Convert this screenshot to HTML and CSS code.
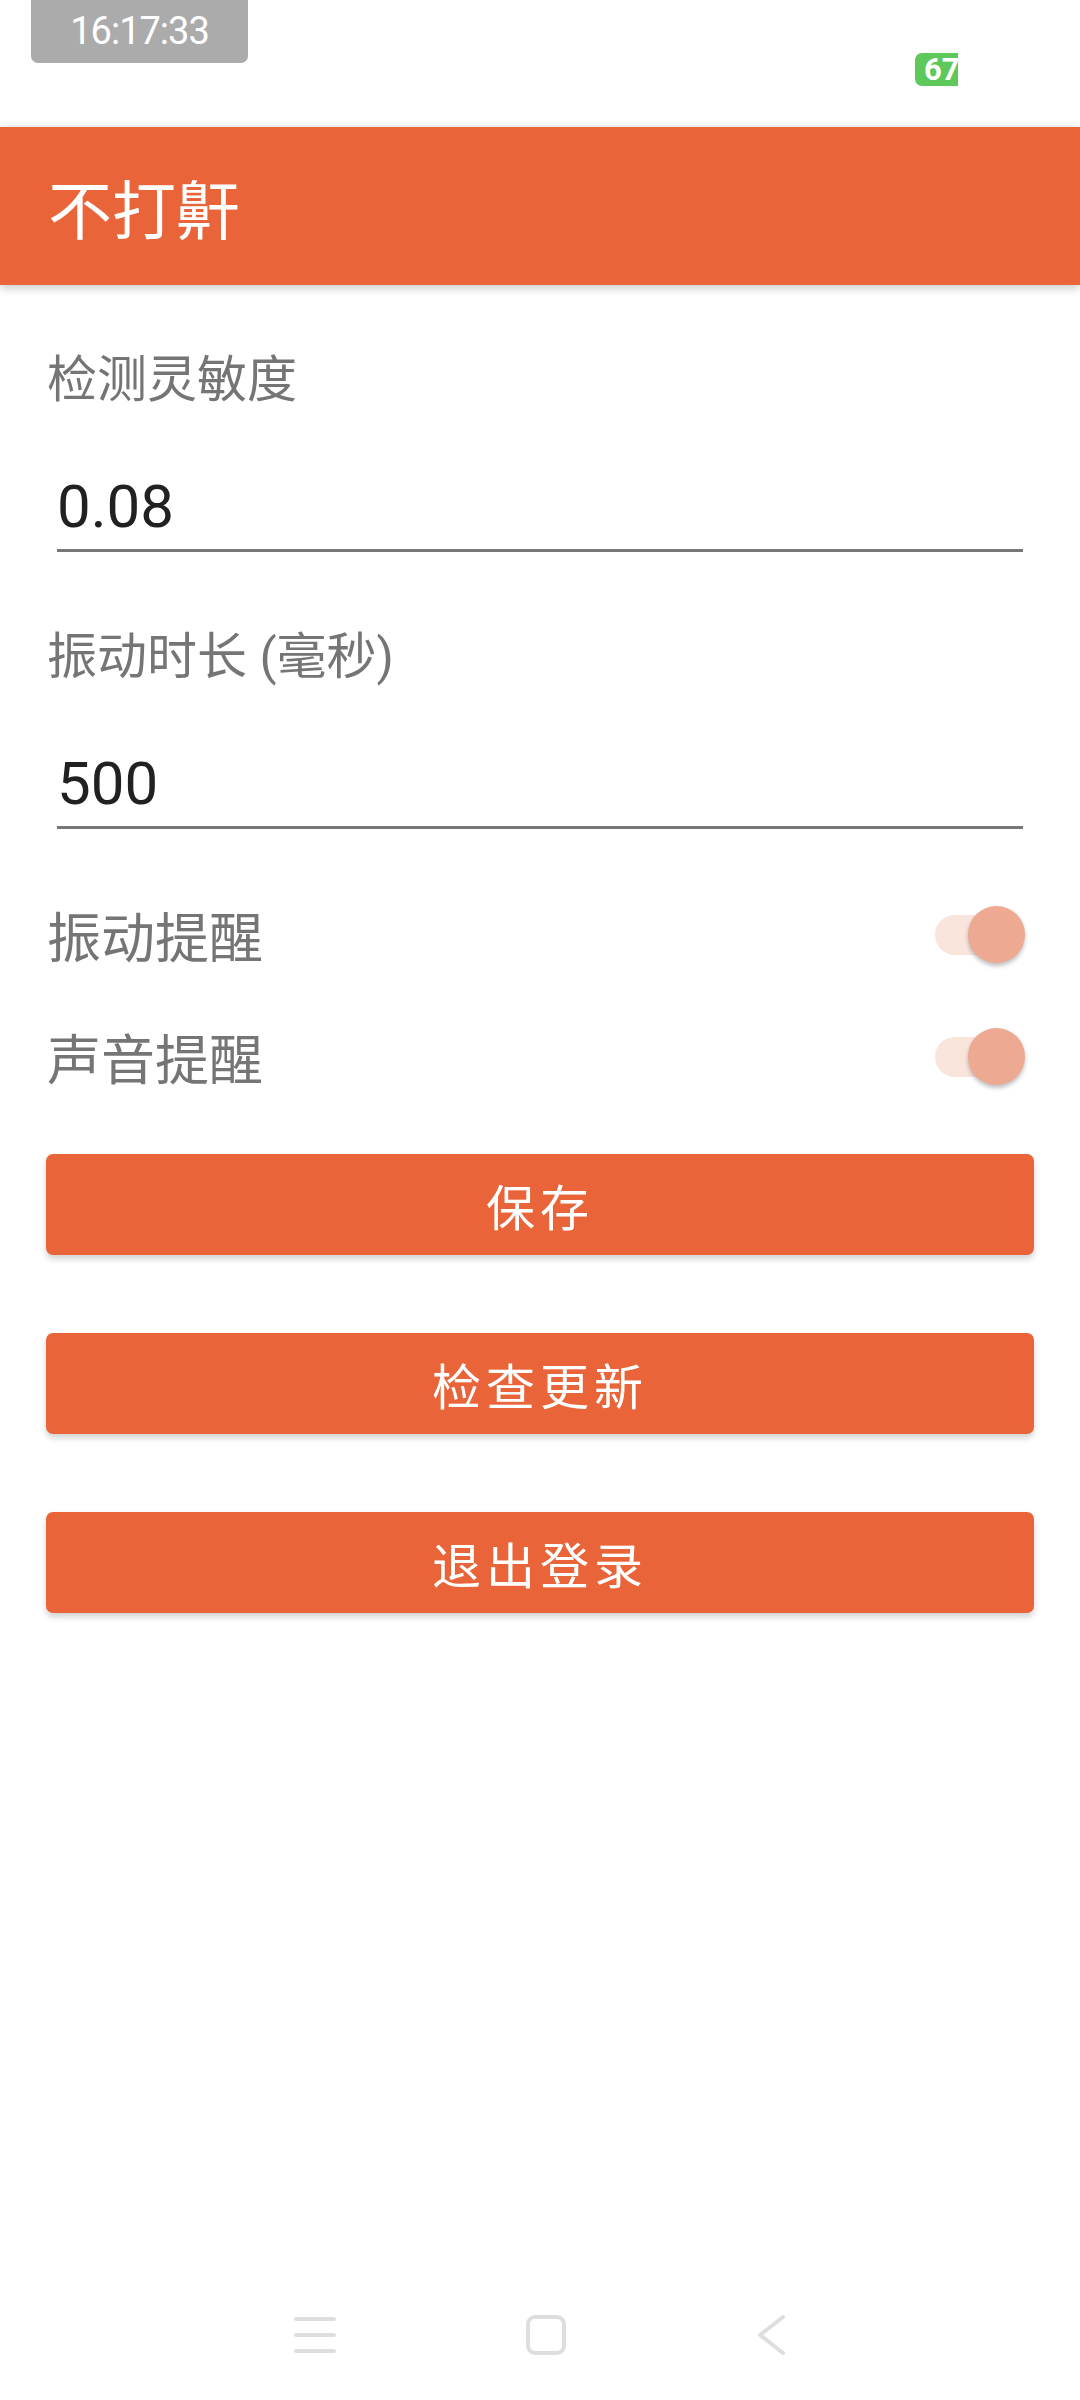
FILE: index.html
```html
<!DOCTYPE html>
<html lang="zh">
  <head>
    <meta charset="UTF-8" />
    <title>不打鼾</title>
    <link rel="stylesheet" href="styles.css">
  </head>
  <body>
    <div class="status">
      <div class="clock">16:17:33</div>
      <div class="battery">67</div>
    </div>

    <div class="appbar">不打鼾</div>

    <div class="content">
      <div class="field-label first">检测灵敏度</div>
      <div class="input">0.08</div>

      <div class="field-label">振动时长 (毫秒)</div>
      <div class="input">500</div>

      <div class="rows">
        <div class="row">
          <span class="row-label">振动提醒</span>
          <span class="switch"><span class="track"></span><span class="thumb"></span></span>
        </div>
        <div class="row">
          <span class="row-label">声音提醒</span>
          <span class="switch"><span class="track"></span><span class="thumb"></span></span>
        </div>
      </div>

      <div class="buttons">
        <button class="btn">保存</button>
        <button class="btn">检查更新</button>
        <button class="btn">退出登录</button>
      </div>
    </div>

    <div class="navbar">
      <svg width="44" height="40" viewBox="0 0 44 40">
        <path d="M3 4h38M3 20h38M3 36h38" stroke="#dedede" stroke-width="4" stroke-linecap="round" />
      </svg>
      <svg width="42" height="42" viewBox="0 0 42 42">
        <rect x="3" y="3" width="36" height="36" rx="7" fill="none" stroke="#dedede" stroke-width="4" />
      </svg>
      <svg width="32" height="42" viewBox="0 0 32 42">
        <path d="M28 3 L5 21 L28 39" fill="none" stroke="#dedede" stroke-width="4" stroke-linecap="round" stroke-linejoin="round" />
      </svg>
    </div>
  </body>
</html>
```

FILE: styles.css
```css
body {
  margin: 0;
  width: 1080px;
  min-height: 2400px;
  display: flex;
  flex-direction: column;
  background: #fff;
  font-family: Roboto, "Noto Sans CJK SC", sans-serif;
}
.status {
  height: 127px;
  display: flex;
  align-items: flex-start;
  padding-left: 31px;
}
.clock {
  width: 217px;
  height: 63px;
  background: #ababab;
  border-radius: 0 0 7px 7px;
  color: #fff;
  font-size: 38px;
  letter-spacing: -1px;
  line-height: 63px;
  text-align: center;
}
.battery {
  margin-left: auto;
  margin-right: 122px;
  margin-top: 53px;
  width: 43px;
  height: 33px;
  overflow: hidden;
  background: #5ec85a;
  border-radius: 7px 0 0 7px;
  color: #fff;
  font-size: 31px;
  font-weight: bold;
  line-height: 34px;
  text-indent: 9px;
  white-space: nowrap;
}
.appbar {
  height: 158px;
  background: #ea643a;
  color: #fff;
  font-size: 64px;
  display: flex;
  align-items: center;
  padding-left: 48px;
  box-shadow: 0 4px 8px rgba(0, 0, 0, 0.18), 0 -3px 6px rgba(0, 0, 0, 0.06);
  position: relative;
}
.content {
  padding: 0 46px;
}
.field-label {
  font-size: 50px;
  line-height: 60px;
  color: #757575;
  margin-top: 75px;
  padding-left: 1px;
}
.field-label.first {
  margin-top: 65px;
}
.input {
  margin: 45px 11px 0;
  height: 82px;
  padding-top: 12px;
  font-size: 60px;
  line-height: 80px;
  color: #212121;
  border-bottom: 3px solid #777;
}
.rows {
  margin-top: 44px;
}
.row {
  height: 122px;
  display: flex;
  align-items: center;
  justify-content: space-between;
}
.row-label {
  font-size: 54px;
  color: #757575;
  padding-left: 1px;
}
.switch {
  position: relative;
  width: 90px;
  height: 57px;
  margin-right: 9px;
}
.track {
  position: absolute;
  left: 0;
  top: 9px;
  width: 75px;
  height: 40px;
  border-radius: 20px;
  background: #fae5dd;
}
.thumb {
  position: absolute;
  right: 0;
  top: 0;
  width: 57px;
  height: 57px;
  border-radius: 50%;
  background: #eda991;
  box-shadow: 0 3px 4px rgba(0, 0, 0, 0.25);
}
.buttons {
  margin-top: 37px;
  display: flex;
  flex-direction: column;
  gap: 78px;
}
.btn {
  height: 101px;
  width: 100%;
  border: none;
  border-radius: 7px;
  background: #ea643a;
  color: #fff;
  font-family: Roboto, "Noto Sans CJK SC", sans-serif;
  font-size: 49px;
  letter-spacing: 5px;
  box-shadow: 0 4px 6px rgba(0, 0, 0, 0.18);
}
.navbar {
  margin-top: auto;
  height: 131px;
  display: flex;
  align-items: center;
  justify-content: center;
  gap: 188px;
}
```
